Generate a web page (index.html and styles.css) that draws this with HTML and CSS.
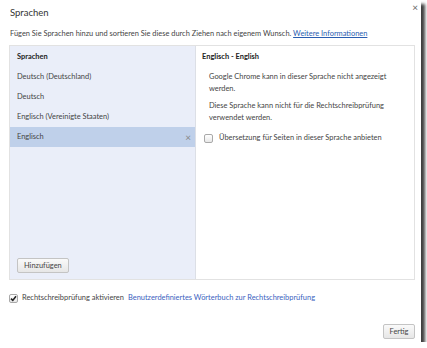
FILE: index.html
```html
<!DOCTYPE html>
<html lang="de">

<head>
    <meta charset="UTF-8">
    <title>Sprachen</title>
    <link rel="stylesheet" href="styles.css">
</head>

<body>

    <div class="dialog">
        <span class="close">&times;</span>
        <div class="title">Sprachen</div>

        <div class="intro">
            Fügen Sie Sprachen hinzu und sortieren Sie diese durch Ziehen nach eigenem Wunsch.
            <a href="#">Weitere Informationen</a>
        </div>

        <div class="panel">
            <!-- Language list -->
            <div class="lang-list">
                <div class="list-head">Sprachen</div>
                <div class="lang">Deutsch (Deutschland)</div>
                <div class="lang">Deutsch</div>
                <div class="lang">Englisch (Vereinigte Staaten)</div>
                <div class="lang selected">Englisch <span class="remove">&times;</span></div>
                <div class="list-fill"></div>
                <div class="list-foot">
                    <button class="btn">Hinzufügen</button>
                </div>
            </div>

            <!-- Details for the selected language -->
            <div class="details">
                <div class="details-head">Englisch - English</div>
                <p>Google Chrome kann in dieser Sprache nicht angezeigt werden.</p>
                <p>Diese Sprache kann nicht für die Rechtschreibprüfung verwendet werden.</p>
                <label class="check-row">
                    <span class="box"></span>
                    Übersetzung für Seiten in dieser Sprache anbieten
                </label>
            </div>
        </div>

        <div class="spell-row">
            <span class="box checked">
                <svg width="7" height="7" viewBox="0 0 7 7"><path d="M1 3.6 L2.8 5.4 L6 1.2" fill="none" stroke="#222" stroke-width="1.6"/></svg>
            </span>
            Rechtschreibprüfung aktivieren
            <a href="#" class="plain-link">Benutzerdefiniertes Wörterbuch zur Rechtschreibprüfung</a>
        </div>

        <div class="footer">
            <button class="btn">Fertig</button>
        </div>
    </div>

</body>

</html>
```

FILE: styles.css
```css
body {
    margin: 0;
    background-color: #ffffff;
    font-family: Lato, "Liberation Sans", sans-serif;
    font-size: 7.45px;
    color: #444;
}

.dialog {
    position: relative;
    width: 421px;
    height: 342px;
    background-color: #ffffff;
    box-shadow: 4px 4px 3px rgba(0, 0, 0, 0.75);
}

.close {
    position: absolute;
    top: 1px;
    right: 3px;
    font-size: 10px;
    color: #666;
}

.title {
    padding: 6px 0 0 10px;
    height: 14px;
    line-height: 14px;
    font-size: 9.5px;
    color: #333;
}

.intro {
    margin-top: 8px;
    padding-left: 10px;
    line-height: 12px;
}

a {
    color: #2a5db0;
}

.plain-link {
    text-decoration: none;
    color: #3b5fc0;
}

.panel {
    display: flex;
    margin: 5px 6px 0 9px;
    height: 233px;
    border: 1px solid #e2e2e2;
}

.lang-list {
    display: flex;
    flex-direction: column;
    width: 185px;
    background-color: #eaeef9;
    border-right: 1px solid #dcdfe6;
    padding-top: 1px;
}

.list-head,
.lang {
    height: 20px;
    line-height: 20px;
    padding-left: 7px;
}

.list-head {
    font-weight: bold;
    color: #222;
}

.lang.selected {
    display: flex;
    justify-content: space-between;
    background-color: #bfd0ea;
    padding-right: 4px;
}

.remove {
    color: #888;
    font-size: 10px;
}

.list-fill {
    flex: 1;
}

.list-foot {
    padding: 0 0 6px 7px;
}

.btn {
    font-family: inherit;
    font-size: 7.45px;
    color: #444;
    height: 15px;
    padding: 0 6px;
    border: 1px solid #c4c4c4;
    border-radius: 2px;
    background: linear-gradient(#fafafa, #e6e6e6);
}

.details {
    flex: 1;
    padding: 1px 0 0 6px;
}

.details-head {
    height: 20px;
    line-height: 20px;
    font-weight: bold;
    color: #222;
}

.details p {
    margin: 4px 0 5px 7px;
    width: 186px;
    line-height: 12px;
}

.check-row {
    display: flex;
    align-items: center;
    gap: 6px;
    margin: 8px 0 0 2px;
    line-height: 12px;
}

.box {
    display: inline-flex;
    align-items: center;
    justify-content: center;
    width: 7px;
    height: 7px;
    border: 1px solid #a9a9a9;
    border-radius: 2px;
    background: linear-gradient(#ffffff, #e8e8e8);
}

.spell-row {
    display: flex;
    align-items: center;
    gap: 4px;
    margin: 12px 0 0 9px;
    line-height: 12px;
}

.footer {
    display: flex;
    justify-content: flex-end;
    padding: 20px 6px 0 0;
}

.footer .btn {
    width: 32px;
    padding: 0;
}
```
